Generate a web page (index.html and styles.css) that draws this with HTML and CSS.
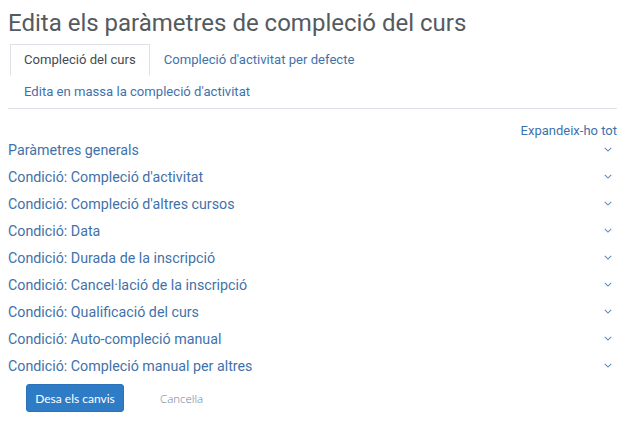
FILE: index.html
```html
<!DOCTYPE html>
<html lang="ca">
<head>
<meta charset="utf-8">
<title>Edita els paràmetres de compleció del curs</title>
<link rel="stylesheet" href="styles.css">
</head>
<body>
<div class="page">
  <h1 class="title">Edita els paràmetres de compleció del curs</h1>
  <nav class="tabs">
    <span class="tab active">Compleció del curs</span>
    <a class="tab" href="#">Compleció d'activitat per defecte</a>
    <a class="tab" href="#">Edita en massa la compleció d'activitat</a>
  </nav>
  <div class="expand-row"><a class="expand" href="#">Expandeix-ho tot</a></div>
  <ul class="sections">
    <li class="section"><a href="#">Paràmetres generals</a><svg class="chev" viewBox="0 0 10 6"><path d="M1 1l4 4 4-4"/></svg></li>
    <li class="section"><a href="#">Condició: Compleció d'activitat</a><svg class="chev" viewBox="0 0 10 6"><path d="M1 1l4 4 4-4"/></svg></li>
    <li class="section"><a href="#">Condició: Compleció d'altres cursos</a><svg class="chev" viewBox="0 0 10 6"><path d="M1 1l4 4 4-4"/></svg></li>
    <li class="section"><a href="#">Condició: Data</a><svg class="chev" viewBox="0 0 10 6"><path d="M1 1l4 4 4-4"/></svg></li>
    <li class="section"><a href="#">Condició: Durada de la inscripció</a><svg class="chev" viewBox="0 0 10 6"><path d="M1 1l4 4 4-4"/></svg></li>
    <li class="section"><a href="#">Condició: Cancel·lació de la inscripció</a><svg class="chev" viewBox="0 0 10 6"><path d="M1 1l4 4 4-4"/></svg></li>
    <li class="section"><a href="#">Condició: Qualificació del curs</a><svg class="chev" viewBox="0 0 10 6"><path d="M1 1l4 4 4-4"/></svg></li>
    <li class="section"><a href="#">Condició: Auto-compleció manual</a><svg class="chev" viewBox="0 0 10 6"><path d="M1 1l4 4 4-4"/></svg></li>
    <li class="section"><a href="#">Condició: Compleció manual per altres</a><svg class="chev" viewBox="0 0 10 6"><path d="M1 1l4 4 4-4"/></svg></li>
  </ul>
  <div class="actions">
    <button class="btn-primary" type="button">Desa els canvis</button>
    <button class="btn-link" type="button">Cancel·la</button>
  </div>
</div>
</body>
</html>
```
FILE: styles.css
```css
* { box-sizing: border-box; }
html, body { margin: 0; padding: 0; background: #fff; }
body { font-family: Roboto, "Liberation Sans", sans-serif; color: #373a3c; }
a { color: #3f72aa; text-decoration: none; }
.page { width: 617px; padding: 6px 0 0 8px; }
.title {
  margin: 0;
  font-weight: 400;
  font-size: 24px;
  line-height: 34px;
  color: #555a5e;
}
.tabs {
  display: flex;
  flex-wrap: wrap;
  margin-top: 4px;
  padding-left: 2px;
  border-bottom: 1px solid #dee2e6;
}
.tab {
  font-size: 13.1px;
  line-height: 20px;
  padding: 5px 13px;
  border: 1px solid transparent;
}
.tab.active {
  color: #454a4e;
  border-color: #dee2e6;
  border-bottom-color: transparent;
  background: #fff;
}
.expand-row {
  display: flex;
  justify-content: flex-end;
  margin-top: 14px;
  margin-bottom: -3px;
}
.expand { font-size: 13px; line-height: 16px; }
.sections { list-style: none; margin: 0; padding: 0; }
.section {
  display: flex;
  align-items: center;
  justify-content: space-between;
  height: 27px;
  font-size: 14.25px;
}
.section a { line-height: 20px; }
.chev {
  width: 8px;
  height: 5px;
  margin-right: 5px;
  fill: none;
  stroke: #5f89b8;
  stroke-width: 1.3;
}
.actions {
  display: flex;
  align-items: center;
  gap: 12px;
  margin-top: 5px;
  padding-left: 18px;
}
.btn-primary {
  font-family: Lato, "Open Sans", sans-serif;
  font-size: 12px;
  color: #fff;
  background: #2e7bc6;
  border: 1px solid #2a72b9;
  border-radius: 3px;
  height: 28px;
  width: 98px;
  padding: 0;
}
.btn-link {
  font-family: "Open Sans", Roboto, sans-serif;
  font-size: 11.5px;
  font-weight: 300;
  color: #6f8194;
  background: none;
  border: none;
  padding: 0 24px;
}
```
